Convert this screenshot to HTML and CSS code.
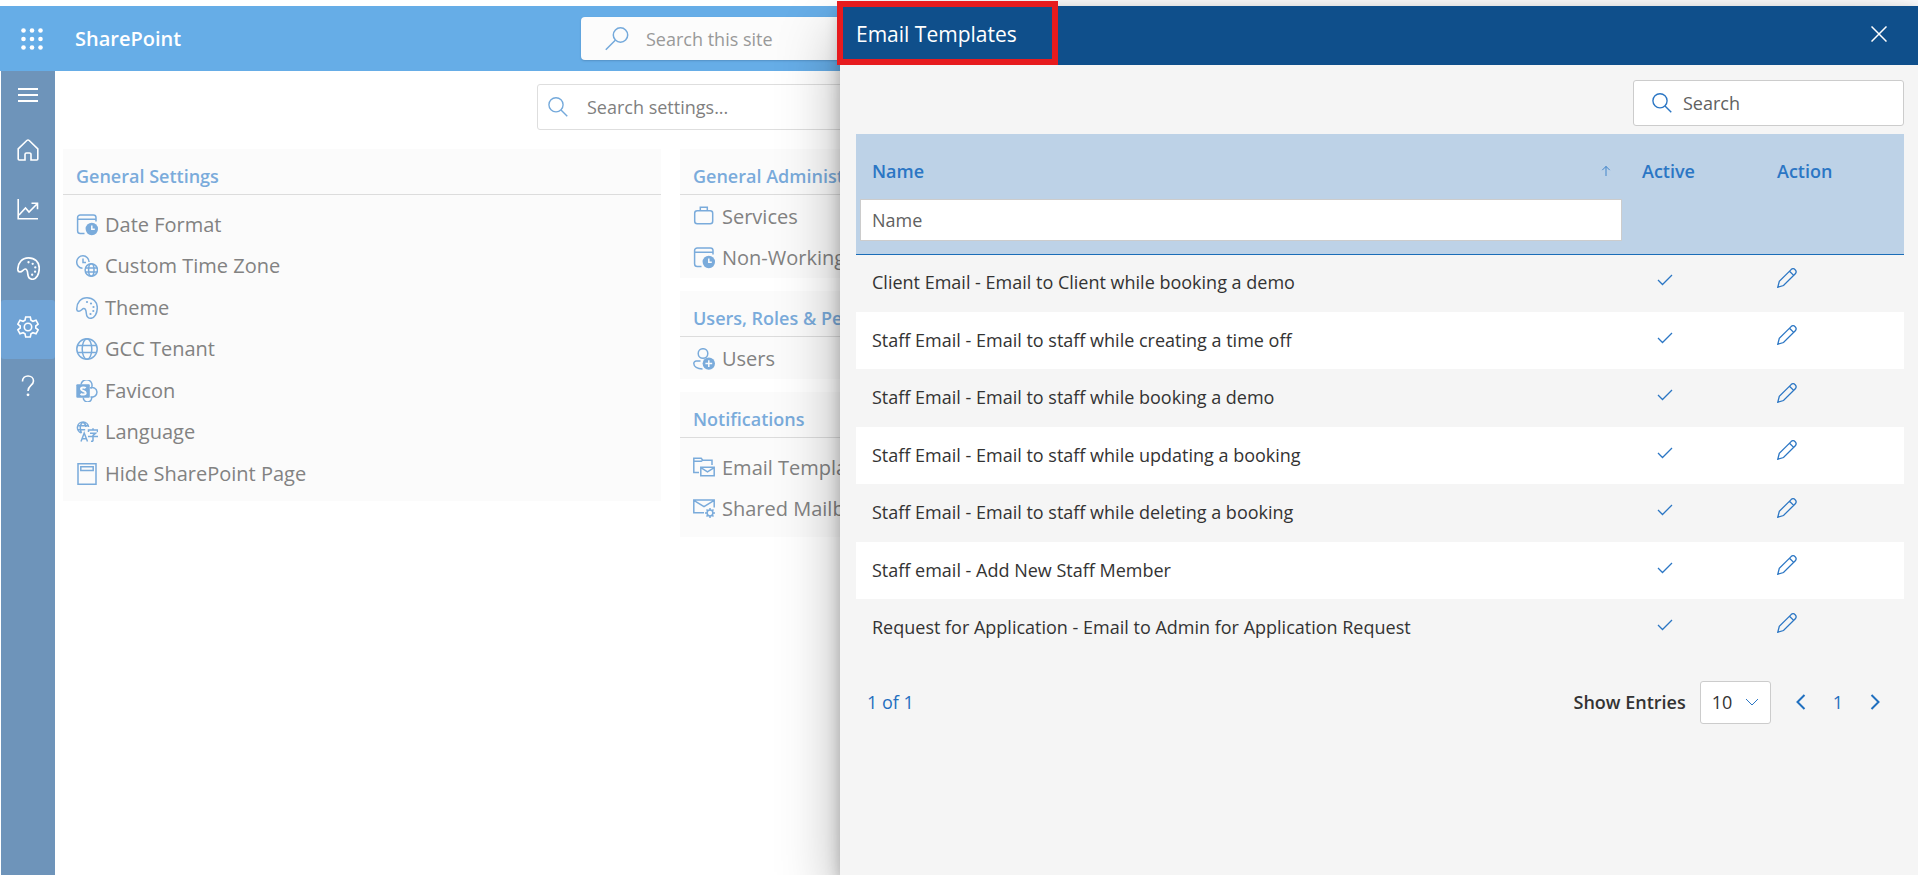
FILE: index.html
```html
<!DOCTYPE html>
<html lang="en">
<head>
<meta charset="utf-8">
<title>SharePoint - Email Templates</title>
<link rel="stylesheet" href="styles.css">
</head>
<body>
<svg class="sprite" aria-hidden="true">
  <symbol id="i-search" viewBox="0 0 22 22"><circle cx="8.8" cy="8.6" r="7.8"/><path d="M14.300 14.200l6.900 6.900"/></symbol>
  <symbol id="i-search-flip" viewBox="0 0 24 24"><circle cx="15.500" cy="8" r="7.2"/><path d="M10.300 13.200L.8 22.800"/></symbol>
  <symbol id="i-palette" viewBox="0 0 22 22"><path d="M.8 12.600C.4 5.500 5 .8 11 .8c6 0 10.300 4 10.300 9.800 0 6-2.800 10.700-6.500 10.700-3.400 0-4.300-2.600-4.500-5.100-.2-2.600-.4-4.700-2.500-4.700-1.700 0-2.600 2.800-5 2.800-1 0-1.900-.7-2-1.700z"/><g class="dots"><circle cx="11" cy="5" r="1.100"/><circle cx="15" cy="6.500" r="1.100"/><circle cx="17.500" cy="10" r="1.100"/><circle cx="17.300" cy="14" r="1.100"/><circle cx="14.500" cy="17" r="1.100"/></g></symbol>
  <symbol id="i-calendar" viewBox="0 0 22 22"><path d="M8.500 19.500H4.200A2.600 2.600 0 0 1 1.600 17V3.500A2.600 2.600 0 0 1 4.200.9h13.200A2.600 2.600 0 0 1 20 3.500V7.500M1.600 5.300H20"/><circle class="solid" cx="15.800" cy="15" r="6.200"/><path class="knock" d="M15.800 11.500V15.200h3"/></symbol>
  <symbol id="i-zone" viewBox="0 0 22 22"><path d="M6.500 13.200A6.200 6.200 0 1 1 13.100 7M7 3.500V7.500h3"/><circle cx="15.300" cy="15" r="6.200"/><ellipse cx="15.300" cy="15" rx="2.700" ry="6.200"/><path d="M9.500 13h11.600M9.500 17h11.600"/></symbol>
  <symbol id="i-globe" viewBox="0 0 22 22"><circle cx="11" cy="11" r="10.200"/><ellipse cx="11" cy="11" rx="4.800" ry="10.200"/><path d="M1.500 7.500h19M1.500 14.500h19"/></symbol>
  <symbol id="i-sp" viewBox="0 0 22 22"><path d="M5 4.500a5.500 5.500 0 0 1 11 1.500c0 1-.3 1.800-.8 2.500M14 8a4.800 4.800 0 1 1 .5 8.800M7.300 17.500a4.200 4.200 0 1 0 8.200-1"/><rect class="solid" x=".3" y="4.300" width="13.500" height="13.500" rx="1"/><path class="knock thick" d="M9.600 8.200C8.700 7 5 7 5 9.100c0 2.100 4.700 1.600 4.700 3.800 0 2-3.900 2.100-5.100.8"/></symbol>
  <symbol id="i-lang" viewBox="0 0 22 22"><path d="M5.500 12A5.600 5.600 0 1 1 12.600 6M1.200 4.700h10.700M1.200 8.700h8M5.500 12C3.500 8 4 3 7 1c2 1.300 2.800 3 2.900 5M5 20.500l3.200-8.500 3.300 8.500M6 17.700h4.500M12.500 11V9h9v2M17 7.200V9M14 12.300h5.500L17 14.300v5.200q0 1-2 .8M12 15.400h10"/></symbol>
  <symbol id="i-page" viewBox="0 0 22 22"><path d="M2 .8h18v20.400H2zM4.800 3.800h12.400v3.600H4.800z"/></symbol>
  <symbol id="i-case" viewBox="0 0 22 22"><rect x="1.700" y="4.700" width="18" height="13" rx="2.500"/><path d="M7.300 4.700V1.300h7v3.400"/></symbol>
  <symbol id="i-user" viewBox="0 0 22 22"><circle cx="10" cy="5.500" r="4.800"/><path d="M7.500 13H3.500a2.500 2.500 0 0 0-2.700 2.600c0 3 3.500 5.200 8.700 5.400"/><circle class="solid" cx="15.800" cy="15.600" r="6.200"/><path class="knock" d="M15.800 12.200v6.800M12.400 15.600h6.800"/></symbol>
  <symbol id="i-mailfolder" viewBox="0 0 22 22"><path d="M6 15.500H.8V1.300h7.400l1.600 1.900h9.200V8M.8 4.300h7.400l1.600-1.100M7.800 10.300h13.400v8.500H7.800zM7.800 10.600l6.700 4.300 6.700-4.300"/></symbol>
  <symbol id="i-mailgear" viewBox="0 0 22 22"><path d="M11 14.700H.8V2h20.400v7.500M.8 2.300L11 8.600l10.200-6.300"/><circle cx="17" cy="15" r="2.900"/><path d="M17 10v2M17 18v2M12 15h2M20 15h2M13.500 11.500l1.400 1.400M19.100 17.100l1.400 1.400M13.500 18.500l1.400-1.400M19.100 12.900l1.400-1.400"/></symbol>
  <symbol id="i-check" viewBox="0 0 16 16"><path d="M1 8l4.500 4.500L15 3"/></symbol>
  <symbol id="i-pencil" viewBox="0 0 20 20"><path d="M.8 19.200l1.500-5.900L14.100 1.600c2.700-2.500 6.600 1.300 4.200 4.200L6.500 17.500zM12.500 3.200l4.200 4.200"/></symbol>
</svg>

<div class="app">
  <header class="suite">
    <button class="waffle" aria-label="App launcher">
      <svg width="22" height="22" viewBox="0 0 22 22"><g fill="#fff"><circle cx="2.500" cy="2.500" r="2.300"/><circle cx="11" cy="2.500" r="2.300"/><circle cx="19.500" cy="2.500" r="2.300"/><circle cx="2.500" cy="11" r="2.300"/><circle cx="11" cy="11" r="2.300"/><circle cx="19.500" cy="11" r="2.300"/><circle cx="2.500" cy="19.500" r="2.300"/><circle cx="11" cy="19.500" r="2.300"/><circle cx="19.500" cy="19.500" r="2.300"/></g></svg>
    </button>
    <a class="brand" href="#">SharePoint</a>
    <label class="site-search">
      <svg class="icon" width="24" height="24"><use href="#i-search-flip"/></svg>
      <input type="search" placeholder="Search this site" aria-label="Search this site">
    </label>
  </header>

  <div class="body">
    <nav class="rail" aria-label="Main">
      <button class="menu" aria-label="Menu"><svg width="20" height="14" viewBox="0 0 20 14"><path d="M0 1h20M0 7h20M0 13h20"/></svg></button>
      <a href="#" aria-label="Home"><svg width="22" height="22" viewBox="0 0 22 22"><path d="M1.200 9.800L9.800 1.500q1.200-1 2.400 0l8.600 8.300V20a1 1 0 0 1-1 1H14v-5.500a1.500 1.500 0 0 0-1.500-1.500h-3A1.500 1.500 0 0 0 8 15.500V21H2.200a1 1 0 0 1-1-1z"/></svg></a>
      <a href="#" aria-label="Reports"><svg width="22" height="22" viewBox="0 0 22 22"><path d="M1.200 1v19.800H21M2 17l6.500-7 3.500 4 8.500-8.500M14.500 5.200h6v6"/></svg></a>
      <a href="#" aria-label="Theme"><svg width="23" height="23"><use href="#i-palette"/></svg></a>
      <a class="current" href="#" aria-label="Settings"><svg width="22" height="22" viewBox="0 0 22 22"><circle cx="11" cy="11" r="3.700"/><path d="M8.700 1h4.600l.7 3.200 1.900 1.100 3.100-1 2.200 3.900L18.800 10v2l2.400 1.800-2.200 3.900-3.100-1-1.900 1.100-.7 3.200H8.700L8 17.800l-1.900-1.100-3.100 1-2.200-3.900L3.200 12v-2L.8 8.200 3 4.300l3.100 1L8 4.200z"/></svg></a>
      <a href="#" aria-label="Help"><svg width="14" height="22" viewBox="0 0 14 22"><path d="M1.500 6.500C1.500 3 4 1 7 1s5.500 2 5.500 5c0 4.500-5.500 4.500-5.500 10"/><circle class="dot" cx="7" cy="19.800" r="1.400"/></svg></a>
    </nav>

    <main class="settings">
      <label class="settings-search">
        <svg class="icon" width="20" height="20"><use href="#i-search"/></svg>
        <input type="search" placeholder="Search settings..." aria-label="Search settings">
      </label>
      <div class="columns">
        <div class="column">
          <section class="card">
            <h2>General Settings</h2>
            <ul>
              <li><a href="#"><svg><use href="#i-calendar"/></svg>Date Format</a></li>
              <li><a href="#"><svg><use href="#i-zone"/></svg>Custom Time Zone</a></li>
              <li><a href="#"><svg><use href="#i-palette"/></svg>Theme</a></li>
              <li><a href="#"><svg><use href="#i-globe"/></svg>GCC Tenant</a></li>
              <li><a href="#"><svg><use href="#i-sp"/></svg>Favicon</a></li>
              <li><a href="#"><svg><use href="#i-lang"/></svg>Language</a></li>
              <li><a href="#"><svg><use href="#i-page"/></svg>Hide SharePoint Page</a></li>
            </ul>
          </section>
        </div>
        <div class="column">
          <section class="card compact">
            <h2>General Administration</h2>
            <ul>
              <li><a href="#"><svg><use href="#i-case"/></svg>Services</a></li>
              <li><a href="#"><svg><use href="#i-calendar"/></svg>Non-Working Days</a></li>
            </ul>
          </section>
          <section class="card compact">
            <h2>Users, Roles &amp; Permissions</h2>
            <ul>
              <li><a href="#"><svg><use href="#i-user"/></svg>Users</a></li>
            </ul>
          </section>
          <section class="card">
            <h2>Notifications</h2>
            <ul>
              <li><a href="#"><svg><use href="#i-mailfolder"/></svg>Email Templates</a></li>
              <li><a href="#"><svg><use href="#i-mailgear"/></svg>Shared Mailbox</a></li>
            </ul>
          </section>
        </div>
        <div class="column"></div>
      </div>
    </main>
  </div>

  <aside class="panel" role="dialog" aria-labelledby="panel-title">
    <header class="panel-head">
      <h1 id="panel-title">Email Templates</h1>
      <button aria-label="Close"><svg width="16" height="16" viewBox="0 0 16 16"><path d="M.5.5l15 15M15.500.5l-15 15"/></svg></button>
    </header>
    <div class="panel-body">
      <label class="list-search">
        <svg class="icon" width="20" height="20"><use href="#i-search"/></svg>
        <input type="search" placeholder="Search" aria-label="Search">
      </label>
      <table class="grid">
        <colgroup><col><col class="c-active"><col class="c-action"></colgroup>
        <thead>
          <tr>
            <th scope="col"><div class="sort">Name<svg width="10" height="14" viewBox="0 0 12 14"><path d="M6 13V1.500M1.500 6L6 1.500 10.500 6"/></svg></div></th>
            <th scope="col">Active</th>
            <th scope="col">Action</th>
          </tr>
          <tr class="filters">
            <td><input type="text" placeholder="Name" aria-label="Filter by name"></td><td></td><td></td>
          </tr>
        </thead>
        <tbody>
          <tr><td>Client Email - Email to Client while booking a demo</td><td><svg class="check"><use href="#i-check"/></svg></td><td><button aria-label="Edit"><svg class="pencil"><use href="#i-pencil"/></svg></button></td></tr>
          <tr><td>Staff Email - Email to staff while creating a time off</td><td><svg class="check"><use href="#i-check"/></svg></td><td><button aria-label="Edit"><svg class="pencil"><use href="#i-pencil"/></svg></button></td></tr>
          <tr><td>Staff Email - Email to staff while booking a demo</td><td><svg class="check"><use href="#i-check"/></svg></td><td><button aria-label="Edit"><svg class="pencil"><use href="#i-pencil"/></svg></button></td></tr>
          <tr><td>Staff Email - Email to staff while updating a booking</td><td><svg class="check"><use href="#i-check"/></svg></td><td><button aria-label="Edit"><svg class="pencil"><use href="#i-pencil"/></svg></button></td></tr>
          <tr><td>Staff Email - Email to staff while deleting a booking</td><td><svg class="check"><use href="#i-check"/></svg></td><td><button aria-label="Edit"><svg class="pencil"><use href="#i-pencil"/></svg></button></td></tr>
          <tr><td>Staff email - Add New Staff Member</td><td><svg class="check"><use href="#i-check"/></svg></td><td><button aria-label="Edit"><svg class="pencil"><use href="#i-pencil"/></svg></button></td></tr>
          <tr><td>Request for Application - Email to Admin for Application Request</td><td><svg class="check"><use href="#i-check"/></svg></td><td><button aria-label="Edit"><svg class="pencil"><use href="#i-pencil"/></svg></button></td></tr>
        </tbody>
      </table>
      <footer class="pager">
        <span class="range">1 of 1</span>
        <label for="entries">Show Entries</label>
        <span class="select">
          <select id="entries"><option>10</option><option>20</option><option>50</option></select>
          <svg width="14" height="8" viewBox="0 0 14 8"><path d="M1 1l6 6 6-6"/></svg>
        </span>
        <button aria-label="Previous page"><svg width="10" height="16" viewBox="0 0 10 16"><path d="M8.500 1l-7 7 7 7"/></svg></button>
        <button class="num">1</button>
        <button aria-label="Next page"><svg width="10" height="16" viewBox="0 0 10 16"><path d="M1.500 1l7 7-7 7"/></svg></button>
      </footer>
    </div>
    <div class="highlight"></div>
  </aside>
</div>
</body>
</html>
```
FILE: styles.css
```css
* { box-sizing: border-box; }
html, body { height: 100%; }
body {
  margin: 0;
  padding-top: 6px;
  overflow: hidden;
  background: #fff;
  color: #333;
  font: 18px/24px "Segoe UI", "Open Sans", "Noto Sans", sans-serif;
}
h1, h2, ul { margin: 0; padding: 0; }
ul { list-style: none; }
a { color: inherit; text-decoration: none; }
button { border: 0; padding: 0; background: none; font: inherit; color: inherit; cursor: pointer; }
input, select { font: inherit; color: inherit; border: 0; outline: 0; background: none; min-width: 0; appearance: none; }
svg { display: block; flex: none; fill: none; stroke: currentColor; }
.sprite { position: absolute; width: 0; height: 0; }
.dots, .solid { fill: currentColor; stroke: none; }
.knock { stroke: #fbfbfb; }
.thick { stroke-width: 2; }

.app { position: relative; display: flex; flex-direction: column; height: 100%; }

/* Suite bar */
.suite { display: flex; align-items: center; height: 65px; padding-left: 21px; background: #66ade7; color: #fff; }
.waffle svg { stroke: none; }
.brand { margin-left: 32px; font-size: 20px; font-weight: 600; width: 506px; }
.site-search {
  display: flex; align-items: center; gap: 17px; width: 760px; height: 43px; padding-left: 24px;
  border-radius: 4px; background: #fcfcfc; color: #74a9db; box-shadow: 0 1px 2px #5591c4;
}
.site-search input { flex: 1; padding: 0; }
.site-search input::placeholder { color: #999; opacity: 1; }
.icon { stroke-width: 1.5; }

/* Navigation rail */
.body { display: flex; flex: 1; min-height: 0; }
.rail { display: flex; flex-direction: column; width: 54px; margin-left: 1px; background: #6e94ba; color: #fff; }
.rail a, .menu { display: flex; align-items: center; justify-content: center; height: 59px; padding-bottom: 5px; stroke-width: 1.6; }
.rail .menu { height: 52px; stroke-width: 2; }
.rail .current { background: #70a3d5; border-radius: 3px; }
.dot { fill: #fff; stroke: none; }

/* Settings page */
.settings { flex: 1; padding: 13px 23px 0 8px; color: #828282; }
.settings-search {
  display: flex; align-items: center; gap: 19px; width: 880px; height: 46px; margin-left: 474px; padding-left: 10px;
  border: 1px solid #dedede; border-radius: 3px; color: #74a9db;
}
.settings-search input { flex: 1; padding: 0; }
.settings-search input::placeholder { color: #7f7f7f; opacity: 1; }
.columns { display: grid; grid-template-columns: repeat(3, 1fr); gap: 19px; margin-top: 19px; }
.column { display: flex; flex-direction: column; gap: 13px; }
.card { background: #fbfbfb; padding-bottom: 7px; }
.card h2 { height: 46px; padding: 15px 13px 0; border-bottom: 1px solid #dcdcdc; font-size: 18px; font-weight: 600; white-space: nowrap; color: #7aabdb; }
.card ul { padding-top: 9px; }
.card.compact { padding-bottom: 0; }
.card.compact ul { padding-top: 1px; }
.card li { height: 41px; }
.card li:nth-child(even) { height: 42px; }
.card.compact li { height: 41px; }
.card li a { display: flex; align-items: center; gap: 7px; height: 100%; padding-left: 13px; font-size: 20px; white-space: nowrap; }
.card li svg { width: 22px; height: 22px; color: #7aabdb; stroke-width: 1.5; }

/* Side panel */
.panel {
  position: absolute; top: 0; right: 0; bottom: 0; width: 1078px;
  display: flex; flex-direction: column; background: #f5f5f5;
  box-shadow: 0 26px 58px rgba(0, 0, 0, .3), 0 5px 14px rgba(0, 0, 0, .22);
}
.panel-head { display: flex; align-items: center; justify-content: space-between; height: 59px; padding: 0 31px 4px 16px; background: #0f4f8b; color: #fff; }
.panel-head h1 { font-size: 21px; line-height: 30px; font-weight: 400; }
.panel-head svg { stroke-width: 1.5; }
.highlight { position: absolute; left: -3px; top: -5px; width: 221px; height: 64px; border: 6px solid #e61b1e; pointer-events: none; }
.panel-body { display: flex; flex-direction: column; padding: 15px 14px 0 16px; }
.list-search {
  align-self: flex-end; display: flex; align-items: center; gap: 11px; width: 271px; height: 46px; padding-left: 18px;
  border: 1px solid #ccc; border-radius: 3px; background: #fff; color: #2b76c4;
}
.list-search input { flex: 1; padding: 0; }
.list-search input::placeholder, .filters input::placeholder { color: #616161; opacity: 1; }
.grid { width: 100%; margin-top: 8px; border-collapse: collapse; table-layout: fixed; }
.c-active { width: 135px; }
.c-action { width: 143px; }
.grid thead { background: #bdd2e7; border-bottom: 1px solid #1a6db8; color: #2b76c4; }
.grid th { height: 65px; padding: 9px 15px 0 16px; text-align: left; font-weight: 600; }
.grid th, .grid td { vertical-align: middle; }
.sort { display: flex; align-items: center; justify-content: space-between; }
.filters td { height: 55px; padding: 0 4px 12px; }
.filters input { display: block; width: 100%; height: 42px; padding: 0 11px; border: 1px solid #ccc; background: #fff; }
.grid tbody td { height: 57px; padding: 0 16px 2px; }
.grid tbody tr:nth-child(odd) td { height: 58px; }
.grid tbody tr:nth-child(even) { background: #fff; }
.grid tbody svg { margin-bottom: 4px; color: #2b76c4; stroke-width: 1.3; }
.check { width: 16px; height: 16px; margin-left: 15px; }
.pencil { width: 20px; height: 20px; }
.pager { display: flex; align-items: center; height: 44px; margin-top: 23px; padding: 0 24px 0 11px; }
.pager, .pager button { color: #1f6fbf; }
.range { margin-right: auto; }
.pager label { margin-right: 14px; color: #333; font-weight: 600; }
.select { display: grid; align-items: center; width: 71px; margin-right: 25px; color: #333; }
.select select, .select svg { grid-area: 1 / 1; }
.select select { height: 43px; padding: 0 11px; border: 1px solid #ccc; border-radius: 3px; background: #fff; }
.select svg { justify-self: end; margin-right: 12px; color: #2b76c4; pointer-events: none; }
.pager button svg { stroke-width: 2; }
.num { margin: 0 27px; }
```
